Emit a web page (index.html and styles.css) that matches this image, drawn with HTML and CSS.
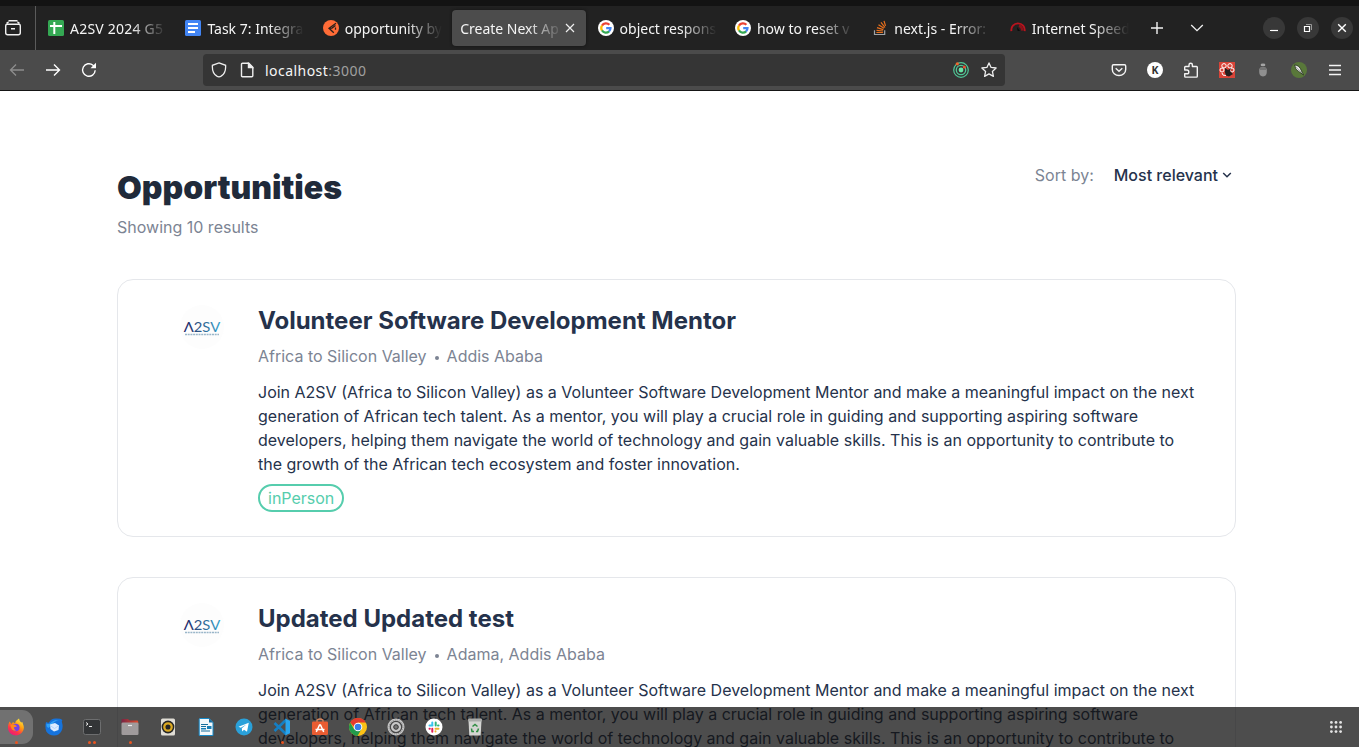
FILE: index.html
```html
<!DOCTYPE html>
<html lang="en">
<head>
<meta charset="utf-8">
<title>Create Next App</title>
<link rel="stylesheet" href="styles.css">
</head>
<body>
<svg width="0" height="0" class="defs">
  <defs>
    <linearGradient id="brand" x1="0" x2="1" y1="0" y2="0"><stop offset="0" stop-color="#1b1f63"/><stop offset=".5" stop-color="#2f6290"/><stop offset="1" stop-color="#34a3d0"/></linearGradient>
    <linearGradient id="fox" x1=".8" x2=".2" y1="0" y2="1"><stop offset="0" stop-color="#fff044"/><stop offset=".4" stop-color="#ff980e"/><stop offset=".7" stop-color="#ff3647"/><stop offset="1" stop-color="#e31587"/></linearGradient>
    <linearGradient id="folder" x1="0" x2="1" y1="0" y2="0"><stop offset="0" stop-color="#7a2444"/><stop offset="1" stop-color="#df4a2a"/></linearGradient>
    <symbol id="google" viewBox="0 0 16 16"><circle cx="8" cy="8" r="8" fill="#fff"/><g fill="none" stroke-width="2.2"><path d="M4 5.6A4.6 4.6 0 0 1 11.4 4.8" stroke="#ea4335"/><path d="M4 5.5a4.7 4.7 0 0 0 0 5" stroke="#fbbc05"/><path d="M4 10.4a4.6 4.6 0 0 0 7.1 1" stroke="#34a853"/><path d="M8.2 8.2h4.3a4.4 4.4 0 0 1-1.5 3.2" stroke="#4285f4"/></g></symbol>
    <symbol id="a2sv" viewBox="0 0 44 44"><circle cx="22" cy="22" r="22" fill="#fdfdfd"/><text x="3.7" y="26.8" textLength="36.500" lengthAdjust="spacingAndGlyphs" font-family="Lato, sans-serif" font-size="14" fill="url(#brand)">Λ2SV</text><path d="M5 29.500h34" stroke="#5a88a8" stroke-width="1.500" stroke-dasharray="2 .7" opacity=".6"/></symbol>
  </defs>
</svg>
<div class="screen">
  <header class="browser">
    <div class="tabstrip">
      <div class="view"><svg class="i18" viewBox="0 0 18 18" fill="none" stroke="#f0f0f0" stroke-width="1.4"><path d="M4.5 1.8h9M3.2 5.2h11.6q1.5 0 1.5 1.5v7.1q0 2-2 2H3.7q-2 0-2-2V6.700q0-1.500 1.500-1.500zM2.700 4.500q.3-1.200 2-1.200M15.300 4.500q-.3-1.200-2-1.200M7 9.700h4"/></svg></div>
      <div class="tabs">
        <div class="tab"><svg class="i16" viewBox="0 0 16 16"><rect width="16" height="16" rx="1.5" fill="#34a853"/><path d="M2 6h12M6.300 2v12" stroke="#fff" stroke-width="2"/></svg><span class="label wide">A2SV 2024 G5</span></div>
        <div class="tab"><svg class="i16" viewBox="0 0 16 16"><rect width="16" height="16" rx="1.5" fill="#4285f4"/><path d="M3 4h10M3 8h10M3 12h7" stroke="#fff" stroke-width="1.9"/></svg><span class="label">Task 7: Integra</span></div>
        <div class="tab"><svg class="i16" viewBox="0 0 16 16"><circle cx="8" cy="8" r="8" fill="#ff6c37"/><path d="M13 3.200 6 8.200l4.800 4.600M6.300 8.300l2.700-.2 3.500-2.600M12.500 7.500v2.200" stroke="#2a201c" stroke-width="1.300" fill="none"/></svg><span class="label">opportunity by</span></div>
        <div class="tab active"><span class="label">Create Next Ap</span><svg class="close" viewBox="0 0 10 10" stroke="#eee" stroke-width="1.200"><path d="m1 1 8 8M9 1 1 9"/></svg></div>
        <div class="tab"><svg class="i16"><use href="#google"/></svg><span class="label">object respons</span></div>
        <div class="tab"><svg class="i16"><use href="#google"/></svg><span class="label">how to reset v</span></div>
        <div class="tab"><svg class="i16" viewBox="0 0 16 16" fill="none"><path d="M2.500 10.200v4.300h10.200v-4.300" stroke="#a0a4a8" stroke-width="1.200"/><path d="M4.400 12.500h6.500M4.500 10.300l6.500.7M5 7.600l6.300 2M6.500 4.700l5.500 3.600M9 2.300l4 5.200M12 .8l1.500 5" stroke="#e9701c" stroke-width="1.200"/></svg><span class="label">next.js - Error:</span></div>
        <div class="tab"><svg class="i16" viewBox="0 0 16 16" fill="none"><path d="M1.400 11.200a6.700 6.700 0 1 1 13.200 0" stroke="#b8141e" stroke-width="1.900"/><path d="M9 5.500q3 1 3.500 5.200" stroke="#8e1119" stroke-width="2.500"/><path d="m7.600 11-.6-4 3 4z" fill="#0b0b0b"/></svg><span class="label">Internet Speed</span></div>
      </div>
      <svg class="plus" viewBox="0 0 14 14" stroke="#f2f2f2" stroke-width="1.400"><path d="M7 1v12M1 7h12"/></svg>
      <svg class="chev" viewBox="0 0 14 8" fill="none" stroke="#f2f2f2" stroke-width="1.300"><path d="m1.200 1 5.800 5.700L12.800 1"/></svg>
      <div class="winctl">
        <svg viewBox="0 0 22 22"><circle cx="11" cy="11" r="11" fill="#383838"/><path d="M7 13.500h8" stroke="#fff" stroke-width="1.200"/></svg>
        <svg viewBox="0 0 22 22" fill="none"><circle cx="11" cy="11" r="11" fill="#383838"/><path d="M7.500 9.500h5v5h-5z" stroke="#fff" stroke-width="1.200"/><path d="M9 7.500h5.500V13" stroke="#999"/></svg>
        <svg viewBox="0 0 22 22"><circle cx="11" cy="11" r="11" fill="#383838"/><path d="m7.200 7.200 7.600 7.600m0-7.600-7.600 7.600" stroke="#fff" stroke-width="1.400"/></svg>
      </div>
    </div>
    <div class="toolbar">
      <div class="nav">
        <svg class="i16" viewBox="0 0 16 16" fill="none" stroke="#8d8d8d" stroke-width="1.300"><path d="M15 8H1.500M7 2.500 1.500 8 7 13.500"/></svg>
        <svg class="i16" viewBox="0 0 16 16" fill="none" stroke="#fff" stroke-width="1.400"><path d="M1 8h13.500M9 2.500 14.500 8 9 13.500"/></svg>
        <svg class="i16" viewBox="0 0 16 16" fill="none" stroke="#fff" stroke-width="1.400"><path d="M14.200 8.300A6.300 6.300 0 1 1 12 3.200l1 1"/><path d="M15 .8v5.500H9.500z" fill="#fff" stroke="none"/></svg>
      </div>
      <div class="url">
        <svg class="i16" viewBox="0 0 16 16" fill="none" stroke="#eee" stroke-width="1.300"><path d="M8 .9 14.600 3.300q.5 7.500-4.200 10.600Q8 15.700 5.600 13.900.9 10.800 1.400 3.300z"/></svg>
        <svg class="i16 page-icon" viewBox="0 0 16 16" fill="none" stroke="#eee" stroke-width="1.400"><path d="M3.500 1.200h6.300l4 4v8.500q0 1-1 1H3.500q-1 0-1-1V2.200q0-1 1-1z"/><path d="M9.500 1.500v4h4z" fill="#eee"/></svg>
        <span class="address">localhost<span>:3000</span></span>
        <svg class="i16 radar" viewBox="0 0 16 16" fill="none" stroke="#4fc796"><circle cx="8" cy="8" r="7.300" stroke-width="1.200"/><circle cx="8" cy="8" r="4.700" stroke-width="1.300"/><circle cx="8" cy="8" r="2.400" fill="#68e5a5" stroke="none"/><circle cx="4.300" cy="1.800" r="1.600" fill="#ed6830" stroke="none"/><circle cx="11.300" cy="5" r="1.500" fill="#ed5030" stroke="none"/></svg>
        <svg class="i16" viewBox="0 0 16 16" fill="none" stroke="#eee" stroke-width="1.300" stroke-linejoin="round"><path d="m8 .9 2.100 4.500 5 .6-3.700 3.400 1 5L8 11.900l-4.400 2.500 1-5L.9 6l5-.6z"/></svg>
      </div>
      <div class="ext">
        <svg class="i16" viewBox="0 0 16 16" fill="none" stroke="#f4f4f4" stroke-width="1.400"><path d="M2.500 2.700h11q1.200 0 1.200 1.200v3.500a6.700 6.100 0 0 1-13.400 0V3.900q0-1.200 1.200-1.200z"/><path d="m4.700 6.200 3.300 3 3.300-3"/></svg>
        <svg class="i16" viewBox="0 0 16 16"><circle cx="8" cy="8" r="8" fill="#fff"/><text x="8" y="11.700" text-anchor="middle" class="k">K</text></svg>
        <svg class="i16" viewBox="0 0 16 16" fill="none" stroke="#f4f4f4" stroke-width="1.400" stroke-linejoin="round"><path d="M1.700 7.500V5.300q0-.8.800-.8h3.500V2.900a1.700 1.700 0 0 1 3.400 0v1.600h4.100q.8 0 .8.800v8.900q0 .9-.9.900H2.500q-.8 0-.8-.8v-2.500h2.200a1.900 1.900 0 0 0 0-3.800H1.700z"/></svg>
        <svg class="i16" viewBox="0 0 16 16"><path fill="#d94438" d="M0 0h16v16H0z"/><g fill="none" stroke="#fff"><circle cx="5" cy="3.800" r="2.200"/><circle cx="11" cy="3.800" r="2.200"/><circle cx="3" cy="8" r="2"/><circle cx="13" cy="8" r="2"/><path d="M3 11q0 3 4 2.500"/></g><path d="m6 6 3 2 3-2-1 3 3 3-4 2.500-3-1-1-3z" fill="#24201f"/></svg>
        <svg class="i16" viewBox="0 0 16 16"><ellipse cx="8" cy="2.900" rx="2.400" ry="1.400" fill="#a5a5a5"/><path d="M4.200 8q0-2.500 2.800-2.800h2q2.800.3 2.800 2.800v2q0 4-3.800 4.500Q4.200 14 4.200 10z" fill="#909090"/><path d="M5 5.500h6V8H5z" fill="#747474"/></svg>
        <svg class="i16" viewBox="0 0 16 16"><circle cx="8" cy="8" r="8" fill="#59783a"/><path d="M3.500 3q5 0 7 6l2 4-4-3Q4 8 3.500 3z" fill="#e9e9e9" stroke="#1f2c17" stroke-width=".8"/><path d="m4 4 8 8" stroke="#777" stroke-width=".5"/></svg>
        <svg class="i16" viewBox="0 0 16 16" stroke="#f4f4f4" stroke-width="1.300"><path d="M2 3.500h12M2 8h12M2 12.500h12"/></svg>
      </div>
    </div>
  </header>

  <main class="page">
    <div class="heading">
      <div>
        <h1>Opportunities</h1>
        <p class="muted">Showing 10 results</p>
      </div>
      <div class="sort"><span class="muted">Sort by:</span><span class="choice">Most relevant<svg viewBox="0 0 10 6" fill="none" stroke="#25324b" stroke-width="1.500"><path d="m1.200 1 3.800 3.800L8.800 1"/></svg></span></div>
    </div>
    <article class="card">
      <svg class="logo"><use href="#a2sv"/></svg>
      <div class="body">
        <h2>Volunteer Software Development Mentor</h2>
        <p class="place muted">Africa to Silicon Valley<i></i>Addis Ababa</p>
        <p class="desc">Join A2SV (Africa to Silicon Valley) as a Volunteer Software Development Mentor and make a meaningful impact on the next generation of African tech talent. As a mentor, you will play a crucial role in guiding and supporting aspiring software developers, helping them navigate the world of technology and gain valuable skills. This is an opportunity to contribute to the growth of the African tech ecosystem and foster innovation.</p>
        <span class="badge">inPerson</span>
      </div>
    </article>
    <article class="card">
      <svg class="logo"><use href="#a2sv"/></svg>
      <div class="body">
        <h2>Updated Updated test</h2>
        <p class="place muted">Africa to Silicon Valley<i></i>Adama, Addis Ababa</p>
        <p class="desc">Join A2SV (Africa to Silicon Valley) as a Volunteer Software Development Mentor and make a meaningful impact on the next generation of African tech talent. As a mentor, you will play a crucial role in guiding and supporting aspiring software developers, helping them navigate the world of technology and gain valuable skills. This is an opportunity to contribute to</p>
      </div>
    </article>
  </main>

  <nav class="dock">
    <div class="app current one"><svg viewBox="0 0 18 18"><path d="M16.500 7.500q1.200 4-1.500 7A8 8 0 0 1 1.700 13Q.3 9.500 1.500 6l1-2.500L4.500 6 6 4l2 1.500Q9 2 12 .5q.3 2.500 2.300 4l1-.5z" fill="url(#fox)"/><circle cx="8.800" cy="9.500" r="3.800" fill="#7542e5"/><path d="M3.500 7 7 6.500q2 .5 3 2l-3 .8q-.5 2 2 3.200-5 1-5.500-5.500z" fill="#ff8a1c"/></svg></div>
    <div class="app"><svg viewBox="0 0 18 18"><path d="M1 4q2 1 3 .5Q6 .8 10.500.6q5-.2 7 1.400-1 1-.5 2.500 1.500 4.500-.5 8.500-2.500 4.500-7.500 4.500T1.300 13.500Q-.3 9 1 4z" fill="#1673dc"/><path d="M1.500 5.500q2 1 3.500 0Q8 1.500 14 2q-4.500 1-6 3.500L3.500 10Q1 9 1.500 5.500z" fill="#2fa0f5"/><path d="M5 6.500 10 5l4 2.500-.5 4.500L9 13.500 5.500 11z" fill="#dcecff"/><path d="m5 7.500 4.500 3L14 7.500" fill="none" stroke="#b5d5fa"/></svg></div>
    <div class="app two"><svg viewBox="0 0 18 18"><rect x=".5" y="1.500" width="17" height="15" rx="2" fill="#333537" stroke="#6d6e6f"/><path d="m3 4.500 2 1.500-2 1.500M6 8.500h3" fill="none" stroke="#eee"/></svg></div>
    <div class="app one"><svg viewBox="0 0 18 18"><path d="M.5 2q0-1 1-1H7l1.500 1.500H16q1.200 0 1.200 1.200V7H.5z" fill="url(#folder)"/><rect x=".5" y="4.500" width="17" height="12.500" rx="1.300" fill="#a09b9c"/><path d="M7 7.500h4" stroke="#eee" stroke-width="1.200"/></svg></div>
    <div class="app"><svg viewBox="0 0 18 18"><rect x="2" y=".5" width="14" height="17" rx="1.500" fill="#e0ddd5"/><circle cx="9" cy="9" r="6.400" fill="#252525"/><circle cx="9" cy="9" r="3.700" fill="none" stroke="#dba922" stroke-width="2.300"/></svg></div>
    <div class="app"><svg viewBox="0 0 18 18"><path d="M3 .5h9l4 4v13H2.200V1.500q0-1 .8-1z" fill="#f4f8fa" stroke="#1689c7"/><path d="M12 .5v4h4z" fill="#116b9f"/><path d="M4 6.500h7M4 8.500h5M4 13h9" stroke="#176f9d"/><path d="M10 8h4.500v3H10zM4 10h5v1.500H4z" fill="#187eb5"/></svg></div>
    <div class="app"><svg viewBox="0 0 18 18"><circle cx="9" cy="9" r="8.500" fill="#2aa1da"/><path d="m3.500 8.800 10.300-4-1.800 9-3-2-1.800 1.700-.4-3.200 4.500-3.800-5.500 3.200z" fill="#fff"/></svg></div>
    <div class="app one"><svg viewBox="0 0 18 18"><path d="m1.500 5 12 11.500M1.500 13 13.500 1.500" stroke="#147fc4" stroke-width="2.600"/><path d="m12.500.8 4.500 2v12.400l-4.500 2z" fill="#29a5ee"/></svg></div>
    <div class="app"><svg viewBox="0 0 18 18"><path d="M6 5V2q3-2 6 0v3" fill="none" stroke="#d78761" stroke-width="1.300"/><rect x="1" y="3.500" width="16" height="13.500" rx="1.300" fill="#e85c32"/><path d="m5.300 14 3.200-7h1l3.200 7M4.500 11.500h9" fill="none" stroke="#fff" stroke-width="1.500"/></svg></div>
    <div class="app"><svg viewBox="0 0 18 18"><circle cx="9" cy="9" r="9" fill="#fbc116"/><path d="M1.200 4.500A9 9 0 0 1 16.800 4.500H9v9z" fill="#e33b2e"/><path d="M1.200 4.500A9 9 0 0 0 8.500 18l4-7H5z" fill="#229a4c"/><circle cx="9" cy="9" r="4.300" fill="#fff"/><circle cx="9" cy="9" r="3.300" fill="#397ee8"/></svg></div>
    <div class="app"><svg viewBox="0 0 18 18" fill="none"><circle cx="9" cy="9" r="8.500" fill="#c7c7c7"/><circle cx="9" cy="9" r="5.700" stroke="#484848" stroke-width="1.300"/><circle cx="9" cy="9" r="7" stroke="#888" stroke-dasharray="1 1"/><circle cx="9" cy="9" r="2.300" fill="#777" stroke="#333"/></svg></div>
    <div class="app"><svg viewBox="0 0 18 18" stroke-width="2" stroke-linecap="round"><circle cx="9" cy="9" r="8.500" fill="#fff"/><path d="M7.300 4.500v3M4.500 7.500h3" stroke="#36c5f0"/><path d="M10.700 4.500v3M13 7.500h.5" stroke="#2eb67d"/><path d="M10.500 10.700h3M10.500 13.500v-.3" stroke="#ecb22e"/><path d="M7.300 10.700v3M4.500 10.700h.3" stroke="#e01e5a"/></svg></div>
    <div class="app trash"><svg viewBox="0 0 18 18"><path d="M2.500 2.500h13l-.8 15H3.300z" fill="#d3d4d2"/><rect x="2" y=".5" width="14" height="3" rx="1" fill="#a9aba9"/><path d="M6.500 8.500 9 6.500l2.500 2M12.500 10.500l-1 3H10M8 13.500H6L5.500 10.500" fill="none" stroke="#2d8c42" stroke-width="1.500"/></svg></div>
    <svg class="grid" viewBox="0 0 12 12" fill="#e4e4e4"><circle cx="1.400" cy="1.400" r="1.400"/><circle cx="6" cy="1.400" r="1.400"/><circle cx="10.600" cy="1.400" r="1.400"/><circle cx="1.400" cy="6" r="1.400"/><circle cx="6" cy="6" r="1.400"/><circle cx="10.600" cy="6" r="1.400"/><circle cx="1.400" cy="10.600" r="1.400"/><circle cx="6" cy="10.600" r="1.400"/><circle cx="10.600" cy="10.600" r="1.400"/></svg>
  </nav>
</div>
</body>
</html>
```
FILE: styles.css
```css
* { box-sizing: border-box; }
body, h1, h2, p { margin: 0; }
body { overflow: hidden; background: #fff; font-family: Inter, sans-serif; font-size: 16px; line-height: 24px; color: #25324b; }
svg { display: block; flex: none; }
.defs { position: absolute; }
.screen { position: relative; height: 747px; overflow: hidden; }
.i16 { width: 16px; height: 16px; }
.i18 { width: 18px; height: 18px; }

.browser { font-family: "Noto Sans", sans-serif; font-size: 14px; color: #f5f5f5; }
.tabstrip { display: flex; height: 50px; align-items: center; border-top: 6px solid #131313; background: #222; }
.view { display: flex; align-items: center; width: 36px; height: 44px; padding-left: 4px; border-right: 1px solid #5b5b5b; }
.tabs { display: grid; grid-template-columns: repeat(8, 134px); column-gap: 3.4px; margin-left: 4px; }
.tab { display: flex; align-items: center; height: 36px; padding: 0 7px 0 8px; gap: 6px; border-radius: 4px; }
.active { padding-right: 11px; gap: 2px; background: #4c4c4c; box-shadow: 0 0 3px #111; }
.label { flex: 1; min-width: 0; overflow: hidden; white-space: nowrap; line-height: 24px; padding-top: 1px; -webkit-mask-image: linear-gradient(to right, #000 calc(100% - 36px), transparent); mask-image: linear-gradient(to right, #000 calc(100% - 36px), transparent); }
.wide { letter-spacing: .22px; }
.close { width: 10px; height: 10px; }
.plus { width: 14px; height: 14px; margin-left: 14px; }
.chev { width: 14px; height: 8px; margin-left: 26px; }
.winctl { display: flex; gap: 12px; margin-left: auto; padding-right: 6px; }
.winctl svg { width: 22px; height: 22px; }

.toolbar { display: flex; align-items: center; height: 41px; background: #4b4b4b; border-bottom: 1px solid #151515; }
.nav { display: flex; gap: 20px; width: 203px; padding-left: 9px; }
.url { display: flex; align-items: center; width: 802px; height: 32px; padding: 0 8px; border-radius: 4px; background: #353535; }
.page-icon { margin: 0 10px 0 12px; }
.address { padding-top: 1px; letter-spacing: .46px; }
.address span { color: #a0a0a0; }
.radar { margin: 0 12px 0 auto; }
.ext { display: flex; gap: 20px; margin-left: auto; padding-right: 16px; }
.k { font: bold 10.500px "Noto Sans", sans-serif; fill: #333; }

.page { padding: 72px 123px 0 117px; }
.heading { display: flex; justify-content: space-between; height: 116px; }
h1 { padding-top: 1px; font-size: 32px; line-height: 48px; font-weight: 900; color: #202a3a; }
.heading p { margin-top: 3px; }
.muted { color: #7c8493; }
.sort { display: flex; gap: 20px; padding-right: 4px; }
.choice { display: flex; align-items: center; gap: 4px; height: 24px; font-weight: 500; }
.choice svg { width: 10px; height: 6px; }
.card { display: flex; height: 258px; margin-bottom: 40px; padding: 24px; border: 1px solid #e5e7eb; border-radius: 16px; }
.logo { width: 44px; height: 44px; margin: 1px 34px 0 38px; }
.body { flex: none; width: 940px; }
h2 { font-size: 24px; line-height: 34px; height: 32px; font-weight: 700; white-space: nowrap; }
.place { display: flex; align-items: center; margin-top: 8px; }
.place i { width: 4px; height: 4px; margin: 3px 8px 0; border-radius: 50%; background: #7c8493; }
.desc { margin: 12px 0 8px; }
.badge { display: inline-block; height: 28px; padding: 0 8px; border: 2px solid #56cdad; border-radius: 14px; color: #56cdad; }

.dock { position: absolute; inset: auto 0 0; z-index: 2; display: flex; height: 40px; background: rgba(17, 17, 17, .75); }
.app { position: relative; display: flex; justify-content: center; width: 38px; padding-top: 11px; }
.app svg { width: 18px; height: 18px; }
.current { width: 33px; height: 34px; margin: 3px 2px 0 0; padding: 8px 1px 0 0; border-radius: 0 11px 11px 0; background: #717171; }
.one::after, .two::after { content: ""; position: absolute; bottom: 3px; width: 3px; height: 3px; border-radius: 50%; background: #e95420; }
.current::after { bottom: 0; }
.two::after { left: 15px; box-shadow: 5px 0 #e95420; }
.trash { margin-left: 3px; }
.grid { width: 12px; height: 12px; margin: 14px 17px 0 auto; }
```
